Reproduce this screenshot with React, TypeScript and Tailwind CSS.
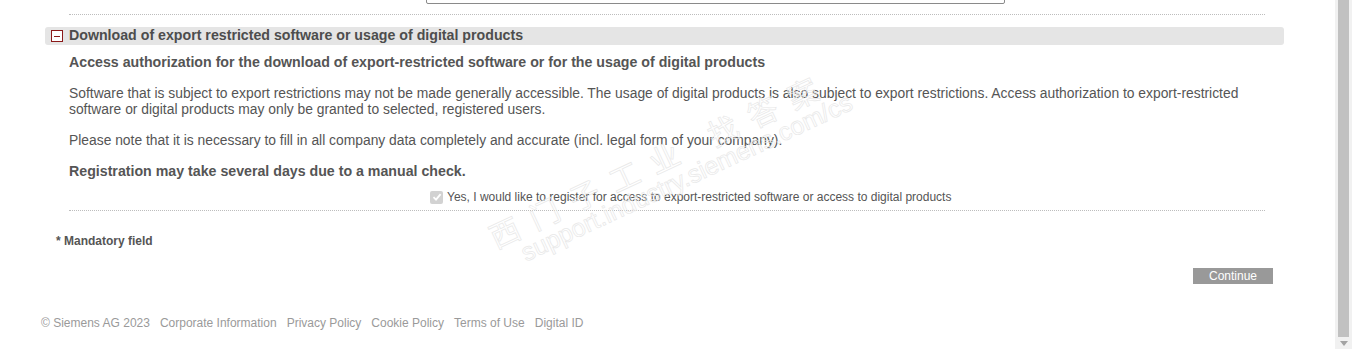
export default function App() {
  const body = "font-['Liberation_Sans',Arial,sans-serif]";
  return (
    <div className="flex h-[349px] w-[1352px] overflow-hidden bg-white">
      <div className={`relative flex w-[1335px] flex-col ${body}`}>
        {/* cut-off previous form row */}
        <div className="-mt-[20px] flex h-[24px] items-center">
          <div className="w-[426px] pl-[70px] text-[13.85px] font-bold text-[#555]">Company legal form</div>
          <div className="h-[24px] w-[579px] rounded-[2px] border border-[#8a8a8a]"></div>
        </div>
        <div className="ml-[69px] mr-[70px] mt-[10px] border-t border-dotted border-[#bdbdbd]"></div>

        {/* section header */}
        <div className="ml-[45px] mr-[51px] mt-[12px] flex h-[18px] items-center rounded-[3px] bg-[#e5e5e5]">
          <span className="ml-[6px] flex h-[12px] w-[12px] items-center justify-center border border-[#8b1a1a] bg-white">
            <span className="h-px w-[6px] bg-[#8b1a1a]"></span>
          </span>
          <span className="-mt-[2px] ml-[6px] text-[14.2px] font-bold leading-[16px] text-[#4d4d4d]">
            Download of export restricted software or usage of digital products
          </span>
        </div>

        <div className="ml-[69px] mr-[70px] text-[13.85px] leading-[16px] text-[#555]">
          <p className="mt-[9px] text-[14.2px] font-bold">
            Access authorization for the download of export-restricted software or for the usage of digital products
          </p>
          <p className="mt-[15px]">
            Software that is subject to export restrictions may not be made generally accessible. The usage of digital products is also subject to export restrictions. Access authorization to export-restricted software or digital products may only be granted to selected, registered users.
          </p>
          <p className="mt-[15px]">
            Please note that it is necessary to fill in all company data completely and accurate (incl. legal form of your company).
          </p>
          <p className="mt-[15px] text-[14.2px] font-bold">Registration may take several days due to a manual check.</p>
        </div>

        <div className="mt-[10px] flex h-[16px] items-center pl-[430px]">
          <span className="flex h-[13px] w-[13px] items-center justify-center rounded-[2px] bg-[#d2d2d2]">
            <svg width="10" height="10" viewBox="0 0 10 10">
              <path d="M1.5 5.2 L4 7.6 L8.6 2.2" fill="none" stroke="#fff" strokeWidth="1.8" />
            </svg>
          </span>
          <span className="ml-[4px] text-[12px] leading-[14px] text-[#555]">
            Yes, I would like to register for access to export-restricted software or access to digital products
          </span>
        </div>
        <div className="ml-[69px] mr-[70px] mt-[5px] border-t border-dotted border-[#bdbdbd]"></div>

        <div className="ml-[56px] mt-[23px] text-[12px] font-bold leading-[14px] text-[#555]">* Mandatory field</div>

        <div className="mt-[20px] flex justify-end pr-[62px]">
          <button className="h-[16px] w-[80px] bg-[#999] text-[12px] leading-[16px] text-white">Continue</button>
        </div>

        <div className="ml-[41px] mt-[32px] flex gap-[10px] text-[12px] leading-[14px] text-[#9a9a9a]">
          <span>© Siemens AG 2023</span>
          <span>Corporate Information</span>
          <span>Privacy Policy</span>
          <span>Cookie Policy</span>
          <span>Terms of Use</span>
          <span>Digital ID</span>
        </div>

        {/* watermark overlay */}
        <div className="pointer-events-none absolute left-[478px] top-[140px] -rotate-[25deg] select-none text-transparent [-webkit-text-stroke:0.7px_#e8e8e8]">
          <div className="font-['Noto_Sans_CJK_SC',sans-serif] text-[30px] leading-[30px] tracking-[14px]">西门子工业 找答案</div>
          <div className="ml-[22px] font-['Liberation_Sans',sans-serif] text-[25px] leading-[26px]">support.industry.siemens.com/cs</div>
        </div>
      </div>

      {/* scrollbar */}
      <div className="flex w-[17px] flex-col bg-[#f1f1f1]">
        <div className="mx-[3px] h-[337px] bg-[#c1c1c1]"></div>
        <div className="flex flex-1 items-center justify-center">
          <svg width="8" height="5" viewBox="0 0 8 5"><path d="M0 0 L8 0 L4 5 Z" fill="#a3a3a3" /></svg>
        </div>
      </div>
    </div>
  );
}
